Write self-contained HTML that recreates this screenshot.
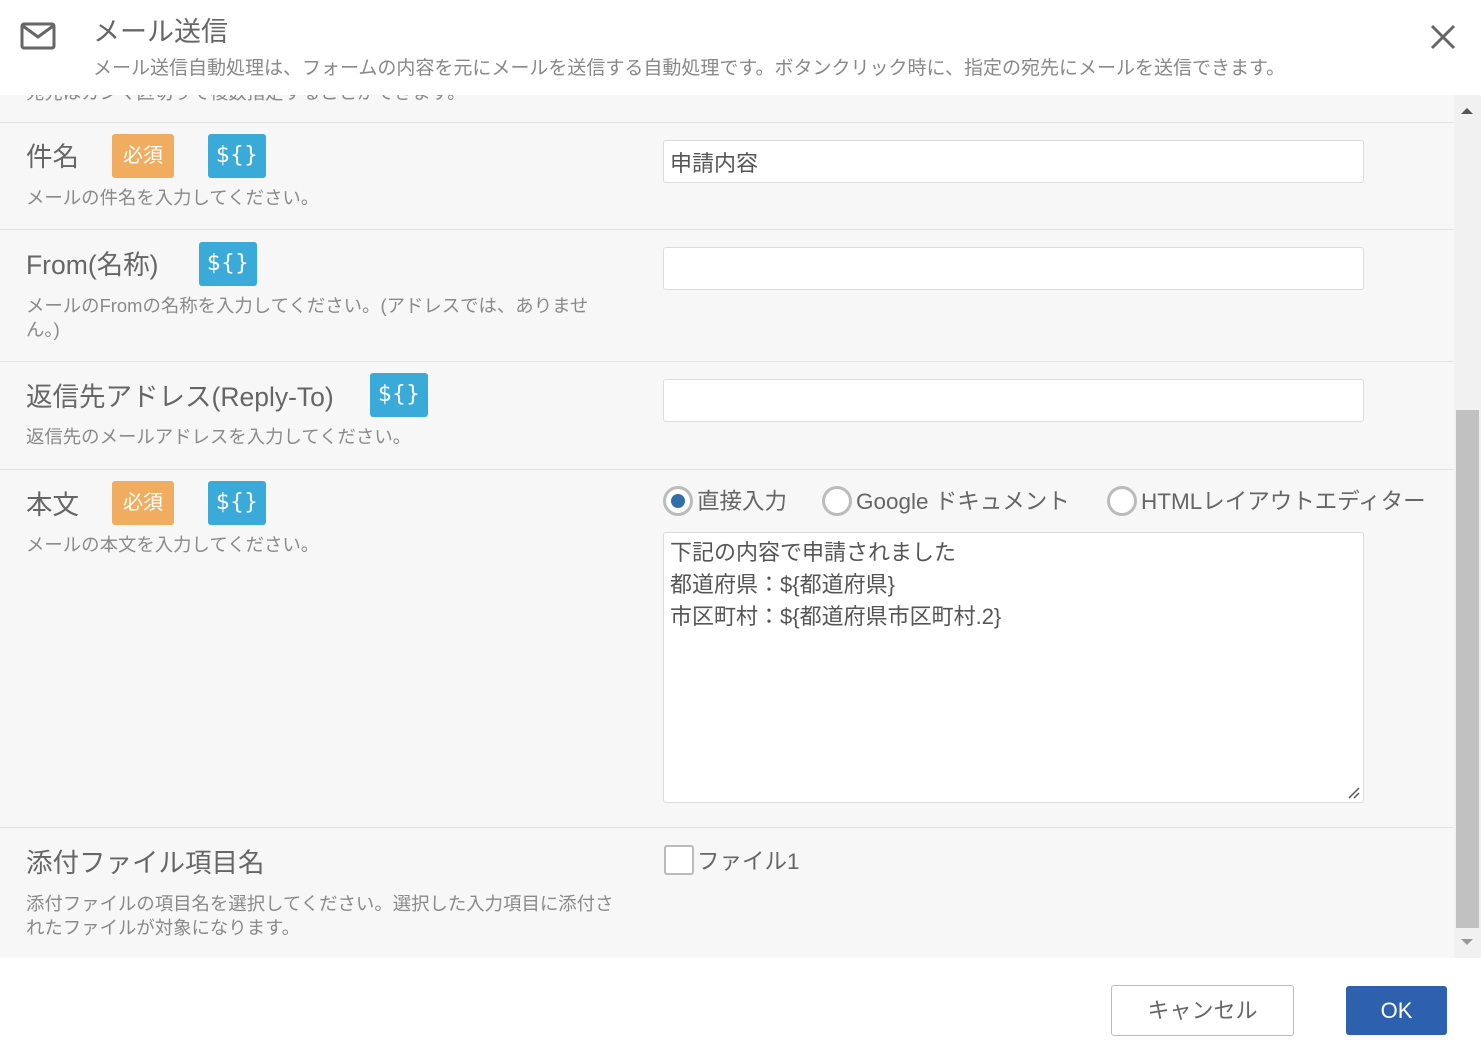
<!DOCTYPE html>
<html><head><meta charset="utf-8"><style>
*{box-sizing:border-box;margin:0;padding:0}
body{width:1481px;height:1050px;overflow:hidden;background:#fff;font-family:"Liberation Sans","Noto Sans CJK JP",sans-serif;color:#666;position:relative}
.abs{position:absolute}
.content{position:absolute;left:0;top:95px;width:1454px;height:863px;background:#f7f7f7;overflow:hidden}
.sep{position:absolute;left:0;width:1454px;height:1px;background:#e2e2e2}
.lbl{position:absolute;left:26px;font-size:26.5px;color:#666;white-space:nowrap}
.desc{position:absolute;left:26px;font-size:18.4px;color:#8a8a8a;line-height:24px;width:595px}
.req{position:absolute;width:62px;height:44px;background:#f0ad60;color:#fff;border-radius:3px;font-size:20px;text-align:center;line-height:44px}
.var{position:absolute;width:58px;height:44px;background:#3aabd9;color:#fff;border-radius:3px;font-size:22px;text-align:center;line-height:44px;font-family:"DejaVu Sans",sans-serif}
.inp{position:absolute;left:663px;width:701px;height:43px;background:#fff;border:1px solid #dcdcdc;border-radius:3px;font-size:22px;padding:5px 6px;color:#555}
.radio{position:absolute;width:30px;height:30px;border:3px solid #bbb;border-radius:50%;background:#fff}
.rtxt{position:absolute;font-size:22.5px;color:#666;white-space:nowrap}
</style></head><body>
<svg class="abs" style="left:20px;top:22px" width="36" height="28" viewBox="0 0 36 28"><rect x="2" y="2" width="32" height="24" rx="2" fill="none" stroke="#666" stroke-width="3"/><path d="M3 4 L18 15 L33 4" fill="none" stroke="#666" stroke-width="3"/></svg>
<div class="abs" style="left:93px;top:10px;font-size:27px;color:#666">メール送信</div>
<div class="abs" style="left:93px;top:53px;font-size:19px;color:#888;white-space:nowrap">メール送信自動処理は、フォームの内容を元にメールを送信する自動処理です。ボタンクリック時に、指定の宛先にメールを送信できます。</div>
<svg class="abs" style="left:1430px;top:24px" width="26" height="26" viewBox="0 0 26 26"><path d="M2 2L24 24M24 2L2 24" stroke="#666" stroke-width="3"/></svg>
<div class="content">
<div class="desc" style="top:-14px">宛先はカンマ区切りで複数指定することができます。</div>
<div class="sep" style="top:27px"></div>
<div class="lbl" style="top:40px">件名</div><div class="req" style="left:112px;top:39px">必須</div><div class="var" style="left:208px;top:39px">${}</div>
<div class="desc" style="top:91px">メールの件名を入力してください。</div>
<div class="inp" style="top:45px">申請内容</div>
<div class="sep" style="top:134px"></div>
<div class="lbl" style="top:148px">From(名称)</div><div class="var" style="left:199px;top:147px">${}</div>
<div class="desc" style="top:199px">メールのFromの名称を入力してください。(アドレスでは、ありません。)</div>
<div class="inp" style="top:152px"></div>
<div class="sep" style="top:266px"></div>
<div class="lbl" style="top:280px">返信先アドレス(Reply-To)</div><div class="var" style="left:370px;top:278px">${}</div>
<div class="desc" style="top:330px">返信先のメールアドレスを入力してください。</div>
<div class="inp" style="top:284px"></div>
<div class="sep" style="top:374px"></div>
<div class="lbl" style="top:388px">本文</div><div class="req" style="left:112px;top:386px">必須</div><div class="var" style="left:208px;top:386px">${}</div>
<div class="desc" style="top:438px">メールの本文を入力してください。</div>
<div class="radio" style="left:663px;top:391px;"><div style="position:absolute;left:5px;top:5px;width:14px;height:14px;border-radius:50%;background:#2f6ea8"></div></div>
<div class="rtxt" style="left:697px;top:389px">直接入力</div>
<div class="radio" style="left:822px;top:391px"></div>
<div class="rtxt" style="left:856px;top:389px">Google ドキュメント</div>
<div class="radio" style="left:1107px;top:391px"></div>
<div class="rtxt" style="left:1141px;top:389px">HTMLレイアウトエディター</div>
<div class="inp" style="top:437px;height:271px;line-height:32px;padding:4px 6px">下記の内容で申請されました<br>都道府県：${都道府県}<br>市区町村：${都道府県市区町村.2}
<svg style="position:absolute;right:3px;bottom:3px" width="12" height="12"><path d="M11 1L1 11M11 6L6 11" stroke="#555" stroke-width="1.5"/></svg></div>
<div class="sep" style="top:732px"></div>
<div class="lbl" style="top:746px">添付ファイル項目名</div>
<div class="desc" style="top:797px">添付ファイルの項目名を選択してください。選択した入力項目に添付されたファイルが対象になります。</div>
<div style="position:absolute;left:664px;top:750px;width:30px;height:30px;border:2px solid #bbb;border-radius:3px;background:#fff"></div>
<div class="rtxt" style="left:697px;top:749px">ファイル1</div>
</div>
<div class="abs" style="left:1454px;top:95px;width:27px;height:863px;background:#f1f1f1"></div>
<div class="abs" style="left:1456px;top:410px;width:23px;height:518px;background:#c1c1c1"></div>
<svg class="abs" style="left:1461px;top:107px" width="12" height="8"><path d="M0 7L6 1L12 7Z" fill="#555"/></svg>
<svg class="abs" style="left:1461px;top:938px" width="12" height="8"><path d="M0 1L6 7L12 1Z" fill="#999"/></svg>
<div class="abs" style="left:1111px;top:985px;width:183px;height:51px;border:1px solid #bbb;border-radius:3px;background:#fff;font-size:22px;color:#666;text-align:center;line-height:49px">キャンセル</div>
<div class="abs" style="left:1346px;top:986px;width:101px;height:49px;border-radius:3px;background:#2e61ad;font-size:22px;color:#fff;text-align:center;line-height:49px">OK</div>
</body></html>
